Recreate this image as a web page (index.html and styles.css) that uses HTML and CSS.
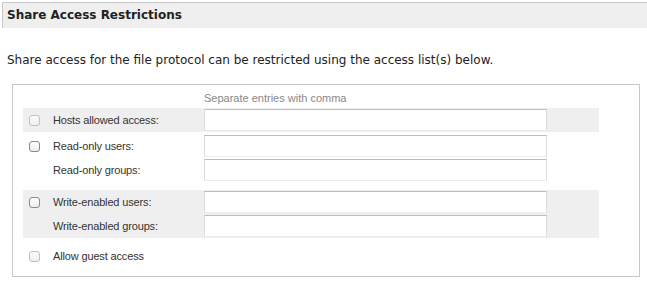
FILE: index.html
```html
<!DOCTYPE html>
<html>
<head>
<meta charset="utf-8">
<link rel="stylesheet" href="styles.css">
</head>
<body>
<div class="header">Share Access Restrictions</div>
<p class="intro">Share access for the file protocol can be restricted using the access list(s) below.</p>
<div class="box">
  <div class="hint">Separate entries with comma</div>
  <div class="group shaded">
    <div class="row">
      <span class="cb-cell"><span class="cb disabled"></span></span>
      <span class="label">Hosts allowed access:</span>
      <span class="field"><span class="input"></span></span>
      <span class="extra"></span>
    </div>
  </div>
  <div class="group">
    <div class="row">
      <span class="cb-cell"><span class="cb"></span></span>
      <span class="label">Read-only users:</span>
      <span class="field"><span class="input"></span></span>
      <span class="extra"></span>
    </div>
    <div class="row">
      <span class="cb-cell"></span>
      <span class="label">Read-only groups:</span>
      <span class="field"><span class="input"></span></span>
      <span class="extra"></span>
    </div>
  </div>
  <div class="group shaded gap">
    <div class="row">
      <span class="cb-cell"><span class="cb"></span></span>
      <span class="label">Write-enabled users:</span>
      <span class="field"><span class="input"></span></span>
      <span class="extra"></span>
    </div>
    <div class="row">
      <span class="cb-cell"></span>
      <span class="label">Write-enabled groups:</span>
      <span class="field"><span class="input"></span></span>
      <span class="extra"></span>
    </div>
  </div>
  <div class="group guest">
    <div class="row">
      <span class="cb-cell"><span class="cb disabled"></span></span>
      <span class="label">Allow guest access</span>
    </div>
  </div>
</div>
</body>
</html>
```
FILE: styles.css
```css
html, body {
  margin: 0;
  padding: 0;
  background: #fff;
}
body {
  padding: 2px 0 0 2px;
  font-family: "DejaVu Sans", Verdana, sans-serif;
  color: #222;
}
.header {
  height: 26px;
  box-sizing: border-box;
  background: #efefef;
  border-top: 1px solid #c8c8c8;
  border-left: 1px solid #c8c8c8;
  padding-left: 4px;
  font-weight: bold;
  font-size: 12px;
  line-height: 24px;
  color: #222;
}
.intro {
  margin: 24px 0 0 0;
  padding-left: 5px;
  font-size: 12px;
  line-height: 16px;
  color: #222;
}
.box {
  margin: 16px 0 0 10px;
  width: 628px;
  height: 193px;
  box-sizing: border-box;
  border: 1px solid #c8c8c8;
  padding: 6px 0 0 10px;
  font-family: "Liberation Sans", Arial, sans-serif;
  font-size: 11px;
  color: #333;
}
.hint {
  margin-left: 181px;
  line-height: 14px;
  color: #888;
  height: 15px;
}
.group {
  width: 576px;
  margin-top: 2px;
}
.group.shaded { background: #efefef; }
.group.gap { margin-top: 8px; }
.group.guest { margin-top: 6px; }
.row {
  display: grid;
  grid-template-columns: 30px 151px 343px 52px;
  height: 24px;
  align-items: center;
}
.cb-cell {
  display: flex;
  padding-left: 6px;
}
.cb {
  width: 11px;
  height: 11px;
  box-sizing: border-box;
  border: 1px solid #8a8a8a;
  border-radius: 3px;
  background: linear-gradient(#ffffff, #ececec);
}
.cb.disabled {
  border-color: #c0c0c0;
  background: linear-gradient(#fafafa, #f0f0f0);
}
.label {
  line-height: 14px;
  letter-spacing: -0.15px;
}
.field { display: flex; }
.input {
  width: 343px;
  height: 22px;
  box-sizing: border-box;
  background: #fff;
  border: 1px solid #dcdcdc;
  border-top-color: #bdbdbd;
  border-bottom-color: #ececec;
}
```
